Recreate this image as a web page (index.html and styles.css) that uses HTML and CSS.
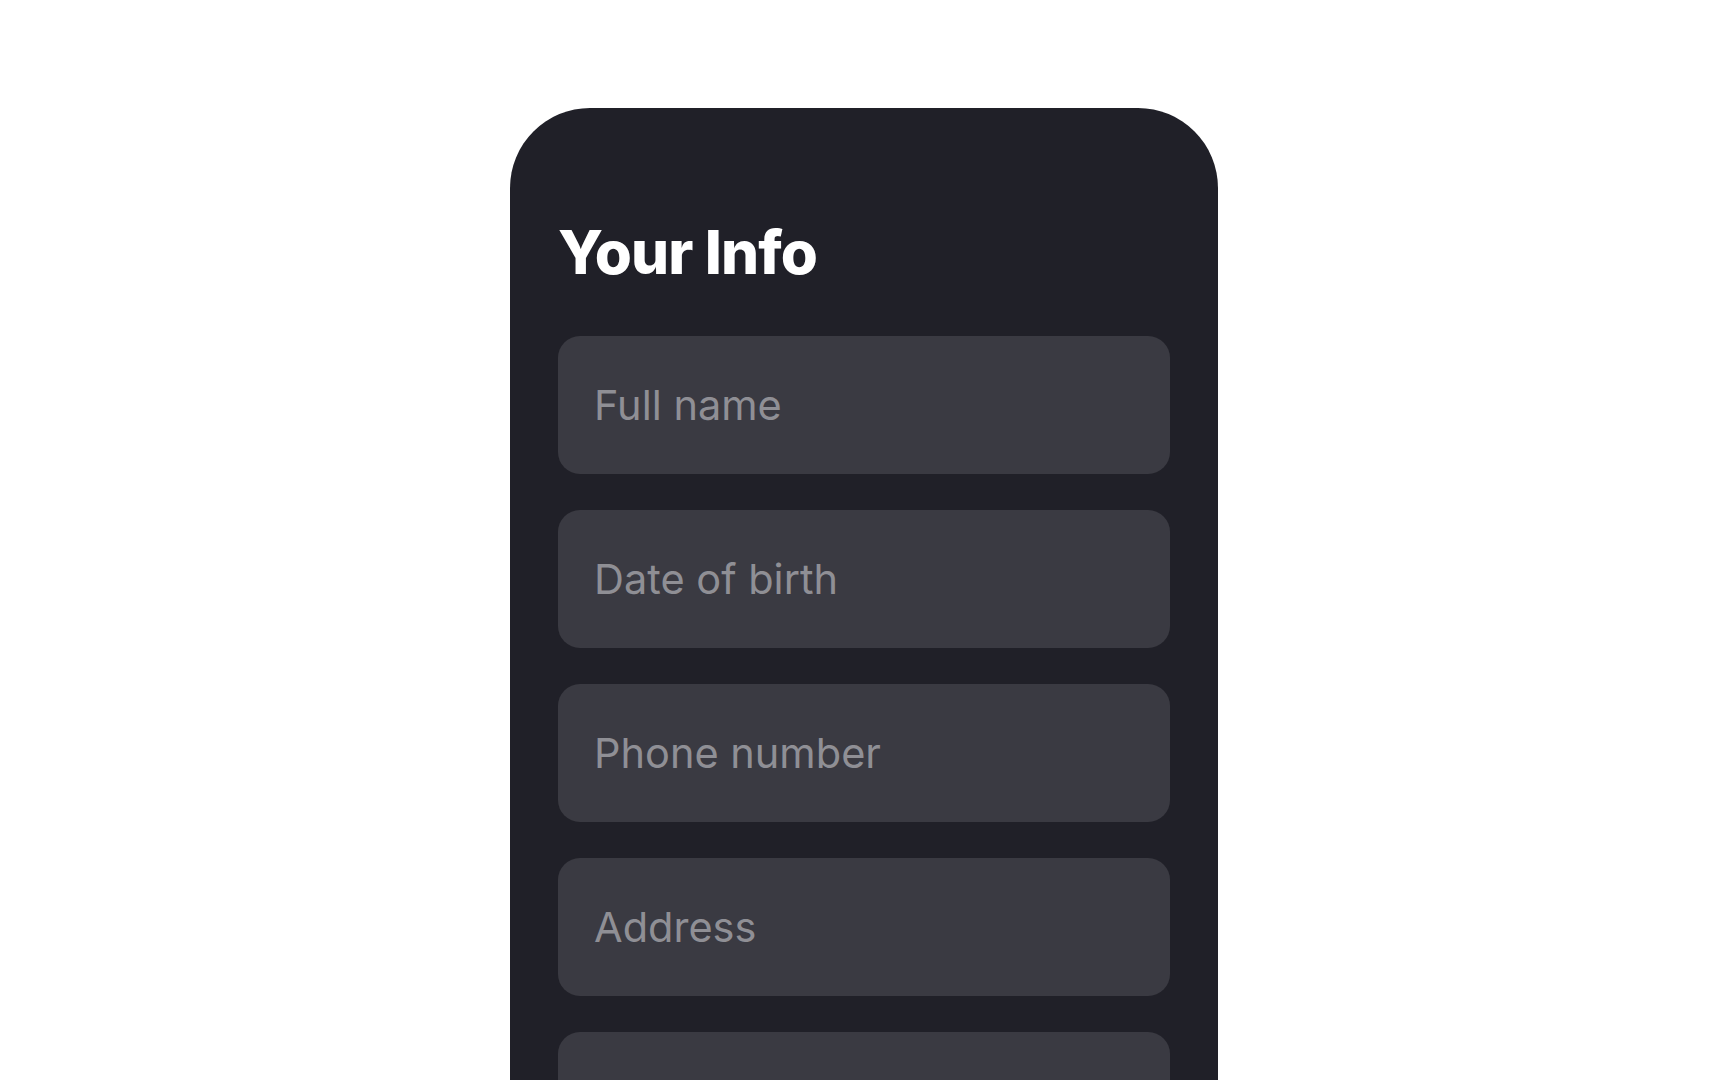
FILE: index.html
```html
<!DOCTYPE html>
<html lang="en">
<head>
<meta charset="utf-8">
<title>Your Info</title>
<link rel="stylesheet" href="styles.css">
</head>
<body>
  <main class="page">
    <section class="card">
      <h1 class="title">Your Info</h1>
      <form class="fields">
        <input class="field" type="text" placeholder="Full name">
        <input class="field" type="text" placeholder="Date of birth">
        <input class="field" type="text" placeholder="Phone number">
        <input class="field" type="text" placeholder="Address">
        <input class="field" type="text" placeholder="Email">
        <input class="field" type="text" placeholder="City">
      </form>
    </section>
  </main>
</body>
</html>
```

FILE: styles.css
```css
* { box-sizing: border-box; }
html, body {
  margin: 0;
  padding: 0;
  background: #ffffff;
  height: 100%;
  overflow: hidden;
}
body {
  font-family: Inter, "Noto Sans", sans-serif;
}
.page {
  display: flex;
  justify-content: center;
  padding-top: 108px;
}
.card {
  width: 708px;
  background: #202028;
  border-radius: 80px 80px 0 0;
  padding: 108px 48px 48px;
}
.title {
  margin: 0 0 48px;
  font-size: 60px;
  line-height: 72px;
  font-weight: 800;
  letter-spacing: -0.015em;
  color: #ffffff;
}
.fields {
  display: flex;
  flex-direction: column;
  gap: 36px;
}
.field {
  display: block;
  width: 100%;
  height: 138px;
  border: none;
  outline: none;
  border-radius: 22px;
  background: #3a3a42;
  padding: 0 36px;
  font-family: Inter, "Noto Sans", sans-serif;
  font-size: 41.5px;
  color: #ffffff;
}
.field::placeholder {
  color: #8f8f95;
  opacity: 1;
}
```
